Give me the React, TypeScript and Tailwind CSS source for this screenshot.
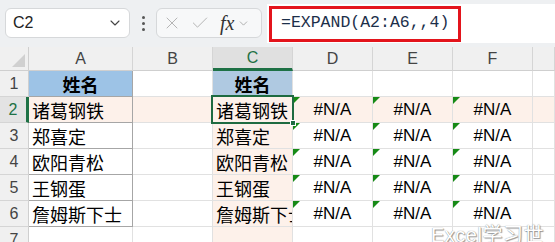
import { Check, ChevronDown, X } from 'lucide-react';

const CJK = '"Noto Sans CJK SC", "Noto Sans", sans-serif';
const NAMES = ['诸葛钢铁', '郑喜定', '欧阳青松', '王钢蛋', '詹姆斯下士'];
const LETTERS = ['A', 'B', 'C', 'D', 'E', 'F', ''];
const ROWS = [1, 2, 3, 4, 5, 6, 7];

function ErrorMark() {
  return (
    <svg className="absolute left-0 top-0" width="7" height="7" viewBox="0 0 7 7">
      <polygon points="0,0 7,0 0,7" fill="#168a16" />
    </svg>
  );
}

function cellBg(row: number, col: number): string {
  if (row === 1 && col === 0) return 'bg-[#9dc3e6]';
  if (row === 1 && col === 2) return 'bg-[#afc9e1]';
  if (row === 2) return 'bg-[#fdf1ea]';
  if (col === 2) return 'bg-[#fdf1ea]';
  return 'bg-white';
}

function Cell({ row, col }: { row: number; col: number }) {
  const edge = col === 0 && row <= 6 ? 'border-[#a6a6a6]' : 'border-[#e1e1e1]';
  let content: React.ReactNode = null;

  if ((col === 0 || col === 2) && row <= 6) {
    if (row === 1) {
      content = <span className="w-full text-center font-bold">姓名</span>;
    } else {
      content = <span className="pl-[3px]">{NAMES[row - 2]}</span>;
    }
  }
  if (col >= 3 && col <= 5 && row >= 2 && row <= 6) {
    content = (
      <>
        <ErrorMark />
        <span className="w-full text-center text-[17px]" style={{ fontFamily: '"Liberation Sans", Arial, sans-serif' }}>
          #N/A
        </span>
      </>
    );
  }

  return (
    <div
      className={`relative flex items-center overflow-hidden whitespace-nowrap border-b border-r text-[18px] leading-none text-black ${edge} ${cellBg(row, col)}`}
      style={{ gridColumnStart: col + 2, gridRowStart: row + 1 }}
    >
      {content}
    </div>
  );
}

export default function App() {
  return (
    <div className="h-[242px] w-[555px] overflow-hidden bg-[#eef0f2]" style={{ fontFamily: CJK }}>
      {/* formula toolbar */}
      <div className="flex h-[47px] items-start">
        <div className="ml-[5px] mt-[8px] flex h-[30px] w-[125px] items-center justify-between rounded-[6px] border border-[#d6d8da] bg-white pl-[7px] pr-[6px]">
          <span className="text-[16px] text-[#222]" style={{ fontFamily: '"Liberation Sans", Arial, sans-serif' }}>C2</span>
          <ChevronDown size={16} strokeWidth={1.6} className="text-[#444]" />
        </div>
        <div className="ml-[12px] mt-[16px] flex flex-col gap-[3px]">
          <div className="h-[3px] w-[3px] rounded-full bg-[#555]" />
          <div className="h-[3px] w-[3px] rounded-full bg-[#555]" />
          <div className="h-[3px] w-[3px] rounded-full bg-[#555]" />
        </div>
        <div className="ml-[11px] mt-[8px] flex h-[30px] w-[106px] items-center rounded-[6px] border border-[#d6d8da] bg-[#f7f8f9] pl-[5px]">
          <X size={20} strokeWidth={1.2} className="text-[#b5b5b5]" />
          <Check size={20} strokeWidth={1.2} className="ml-[8px] text-[#b5b5b5]" />
          <span className="ml-[10px] text-[20px] italic text-[#333]" style={{ fontFamily: '"Liberation Serif", "Times New Roman", serif' }}>
            fx
          </span>
          <ChevronDown size={13} strokeWidth={1.4} className="ml-[3px] text-[#999]" />
        </div>
        <div className="ml-[5px] mt-[4px] flex h-[39px] flex-1 items-center bg-white">
          <div className="ml-[2px] flex h-[36px] w-[192px] items-center border-[3px] border-[#e3141c] pl-[9px]">
            <span className="text-[16.5px] text-[#1c2f4a]" style={{ fontFamily: '"Liberation Mono", "Courier New", monospace' }}>
              =EXPAND(A2:A6,,4)
            </span>
          </div>
        </div>
      </div>

      {/* sheet */}
      <div className="relative grid grid-cols-[29px_104px_80px_80px_80px_80px_80px_22px] grid-rows-[24px_26px_26px_26px_26px_26px_26px_26px] bg-white">
        {/* select-all corner */}
        <div className="relative border-b border-r border-[#cfcfcf] bg-[#f0f0f0]" style={{ gridColumnStart: 1, gridRowStart: 1 }}>
          <svg className="absolute bottom-[3px] right-[3px]" width="13" height="13" viewBox="0 0 13 13">
            <polygon points="13,0 13,13 0,13" fill="#d0d0d0" />
          </svg>
        </div>

        {LETTERS.map((l, i) => (
          <div
            key={i}
            className={`flex items-center justify-center border-r border-[#d5d5d5] text-[16px] ${
              l === 'C' ? 'border-b-[3px] border-b-[#1e7145] bg-[#e0e0e0] text-[#1e7145]' : 'border-b border-b-[#cfcfcf] bg-[#f0f0f0] text-[#444]'
            }`}
            style={{ gridColumnStart: i + 2, gridRowStart: 1, fontFamily: '"Liberation Sans", Arial, sans-serif' }}
          >
            {l}
          </div>
        ))}

        {ROWS.map((r) => (
          <div
            key={r}
            className={`flex items-center justify-center border-b border-[#d5d5d5] text-[16px] ${
              r === 2 ? 'border-r-[3px] border-r-[#1e7145] bg-[#e3e3e3] text-[#1e7145]' : 'border-r border-r-[#cfcfcf] bg-[#f0f0f0] text-[#444]'
            }`}
            style={{ gridColumnStart: 1, gridRowStart: r + 1, fontFamily: '"Liberation Sans", Arial, sans-serif' }}
          >
            {r}
          </div>
        ))}

        {ROWS.map((r) => LETTERS.map((_, c) => <Cell key={`${r}-${c}`} row={r} col={c} />))}

        {/* spill range outline C2:F6 */}
        <div
          className="pointer-events-none ml-[-1px] mt-[-1px] border border-[#3465b8]"
          style={{ gridColumn: '4 / 8', gridRow: '3 / 8' }}
        />

        {/* active cell C2 */}
        <div
          className="pointer-events-none relative mb-[-1px] ml-[-2px] mr-[-1px] mt-[-2px] border-2 border-[#1e6b41]"
          style={{ gridColumn: '4 / 5', gridRow: '3 / 4' }}
        >
          <div className="absolute bottom-[-4px] right-[-4px] h-[6px] w-[6px] border border-white bg-[#1e6b41]" />
        </div>

        {/* watermark */}
        <div
          className="absolute left-[431px] top-[172px] text-[20px] tracking-[0.5px] text-white"
          style={{ textShadow: '0 0 1px #777, 1px 1px 1px #999' }}
        >
          <span style={{ fontFamily: '"Liberation Sans", Arial, sans-serif', fontWeight: 300 }}>Excel</span>
          学习世界
        </div>
      </div>
    </div>
  );
}
